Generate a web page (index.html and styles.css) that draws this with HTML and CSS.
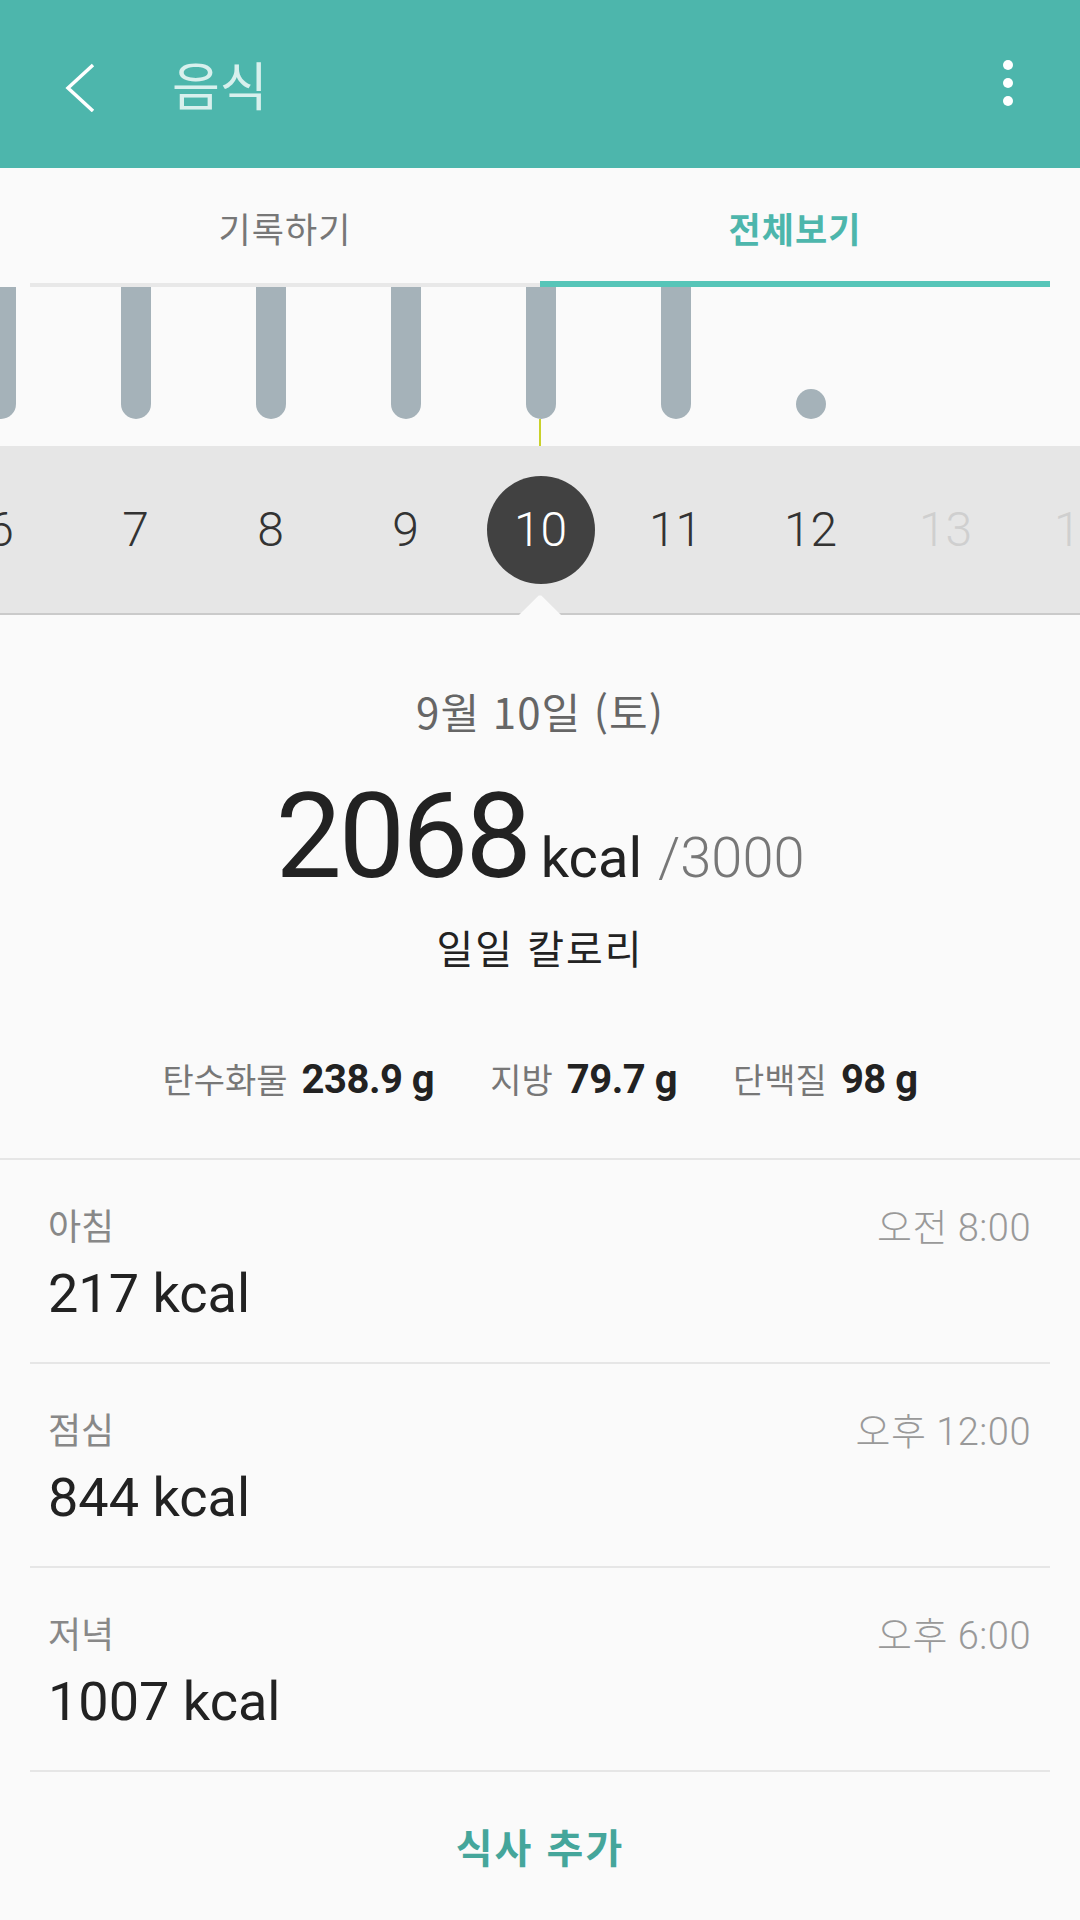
FILE: index.html
```html
<!DOCTYPE html>
<html lang="ko">
<head>
<meta charset="utf-8">
<title>음식</title>
<link rel="stylesheet" href="styles.css">
</head>
<body>
<div class="app">
  <header class="appbar">
    <svg class="back" width="40" height="60" viewBox="0 0 40 60"><polyline points="38,13 13,36 38,59" fill="none" stroke="#fff" stroke-width="3.5"/></svg>
    <h1 class="title">음식</h1>
    <div class="kebab"><span></span><span></span><span></span></div>
  </header>

  <nav class="tabs">
    <div class="tab"><div class="tab-label">기록하기</div><div class="tab-ind"></div></div>
    <div class="tab active"><div class="tab-label">전체보기</div><div class="tab-ind"></div></div>
  </nav>

  <section class="chart">
    <div class="col"><div class="bar"></div></div>
    <div class="col"><div class="bar"></div></div>
    <div class="col"><div class="bar"></div></div>
    <div class="col"><div class="bar"></div></div>
    <div class="col"><div class="bar"></div></div>
    <div class="col"><div class="bar"></div></div>
    <div class="col"><div class="bar dot"></div></div>
    <div class="col"></div>
    <div class="col"></div>
  </section>
  <div class="cursor"><div class="cursor-line"></div></div>

  <section class="days">
    <div class="day">6</div>
    <div class="day">7</div>
    <div class="day">8</div>
    <div class="day">9</div>
    <div class="day selected"><span class="sel-circle">10</span></div>
    <div class="day">11</div>
    <div class="day">12</div>
    <div class="day future">13</div>
    <div class="day future">14</div>
    <div class="notch"></div>
  </section>

  <section class="summary">
    <div class="date">9월 10일 (토)</div>
    <div class="total">
      <span class="total-num">2068</span>
      <span class="total-unit">kcal</span>
      <span class="total-goal">/3000</span>
    </div>
    <div class="total-label">일일 칼로리</div>
    <div class="macros">
      <span class="macro"><span class="m-label">탄수화물</span><b class="m-val">238.9 g</b></span>
      <span class="macro"><span class="m-label">지방</span><b class="m-val">79.7 g</b></span>
      <span class="macro"><span class="m-label">단백질</span><b class="m-val">98 g</b></span>
    </div>
  </section>

  <ul class="meals">
    <li class="meal">
      <div class="meal-top"><span class="meal-name">아침</span><span class="meal-time">오전 8:00</span></div>
      <div class="meal-kcal">217 kcal</div>
    </li>
    <li class="meal">
      <div class="meal-top"><span class="meal-name">점심</span><span class="meal-time">오후 12:00</span></div>
      <div class="meal-kcal">844 kcal</div>
    </li>
    <li class="meal">
      <div class="meal-top"><span class="meal-name">저녁</span><span class="meal-time">오후 6:00</span></div>
      <div class="meal-kcal">1007 kcal</div>
    </li>
  </ul>

  <div class="add">식사 추가</div>
</div>
</body>
</html>
```

FILE: styles.css
```css
* { box-sizing: border-box; }
html, body { margin: 0; padding: 0; }
body {
  background: #fafafa;
  font-family: Roboto, "Noto Sans CJK KR", sans-serif;
  color: #222;
}
.app { width: 1080px; height: 1920px; overflow: hidden; background: #fafafa; }

.appbar {
  height: 168px;
  background: #4db6ac;
  display: flex;
  align-items: center;
  padding: 0 0 0 55px;
}
.back { display: block; margin-top: -4px; }
.title {
  margin: 0 0 0 77px;
  font-family: "Noto Sans CJK KR", sans-serif;
  font-weight: 400;
  font-size: 52px;
  line-height: 60px;
  color: #d8f0ed;
  flex: 1;
}
.kebab {
  width: 144px;
  display: flex;
  flex-direction: column;
  align-items: center;
  gap: 8px;
  margin-top: -2px;
}
.kebab span { width: 10px; height: 10px; border-radius: 50%; background: #fff; display: block; }

.tabs { display: flex; padding: 0 30px; }
.tab { flex: 1; display: flex; flex-direction: column; }
.tab-label {
  height: 113px;
  display: flex;
  align-items: center;
  justify-content: center;
  padding-top: 6px;
  font-family: "Noto Sans CJK KR", sans-serif;
  font-size: 35px;
  color: #777;
  letter-spacing: 1px;
}
.tab-ind { height: 4px; margin-top: 2px; background: #e8e8e8; }
.tab.active .tab-label { color: #4db6ac; font-weight: 700; }
.tab.active .tab-ind { height: 6px; margin-top: 0; background: #56c5b8; }

.chart {
  height: 132px;
  display: flex;
  align-items: flex-end;
  margin-left: -67px;
}
.col { width: 135px; flex: none; display: flex; justify-content: center; align-items: flex-end; height: 100%; }
.bar { width: 30px; height: 132px; background: #a5b2b9; border-radius: 0 0 15px 15px; }
.bar.dot { height: 30px; border-radius: 50%; }

.cursor { height: 27px; display: flex; justify-content: center; }
.cursor-line { width: 2px; background: #c9d12b; }

.days {
  position: relative;
  height: 169px;
  background: #e6e6e6;
  border-bottom: 2px solid #cacaca;
  display: flex;
  align-items: center;
  margin-left: -67px;
  width: 1282px;
}
.day {
  width: 135px;
  flex: none;
  text-align: center;
  font-size: 48px;
  font-weight: 300;
  color: #333;
  display: flex;
  justify-content: center;
  align-items: center;
}
.day.future { color: #cfcfcf; }
.sel-circle {
  width: 108px;
  height: 108px;
  border-radius: 50%;
  background: #414141;
  color: #fff;
  display: flex;
  align-items: center;
  justify-content: center;
}
.notch {
  position: absolute;
  left: 586px;
  bottom: -2px;
  width: 42px;
  height: 20px;
  background: #fafafa;
  clip-path: polygon(0 100%, 47% 3%, 53% 3%, 100% 100%);
}

.summary {
  display: flex;
  flex-direction: column;
  align-items: center;
  padding-top: 70px;
  border-bottom: 2px solid #e6e6e6;
  padding-bottom: 53px;
}
.date {
  font-family: "Noto Sans CJK KR", sans-serif;
  font-size: 42px;
  line-height: 52px;
  color: #666;
  letter-spacing: 1px;
}
.total {
  margin-top: 40px;
  display: flex;
  align-items: baseline;
}
.total-num { font-size: 118px; line-height: 120px; font-weight: 400; color: #222; letter-spacing: -3px; }
.total-unit { font-size: 56px; line-height: 60px; margin-left: 12px; color: #222; }
.total-goal { font-size: 56px; line-height: 60px; margin-left: 16px; color: #777; font-weight: 300; }
.total-label {
  margin-top: 25px;
  font-family: "Noto Sans CJK KR", sans-serif;
  font-size: 40px;
  line-height: 50px;
  color: #222;
  letter-spacing: 2px;
}
.macros {
  margin-top: 82px;
  display: flex;
  gap: 56px;
  line-height: 50px;
}
.macro { display: flex; align-items: baseline; gap: 14px; }
.m-label { font-family: "Noto Sans CJK KR", sans-serif; font-size: 34px; color: #777; }
.m-val { font-size: 40px; font-weight: 700; color: #222; letter-spacing: -0.5px; }

.meals { list-style: none; margin: 0; padding: 0; }
.meal {
  margin: 0 30px;
  padding: 42px 19px 38px 18px;
  border-bottom: 2px solid #e6e6e6;
}
.meal-top { display: flex; justify-content: space-between; align-items: center; height: 44px; }
.meal-name { font-family: "Noto Sans CJK KR", sans-serif; font-size: 36px; color: #888; }
.meal-time { font-family: Roboto, "Noto Sans CJK KR", sans-serif; font-size: 38px; color: #999; font-weight: 300; letter-spacing: 0.5px; }
.meal-kcal { margin-top: 18px; font-size: 54px; line-height: 60px; color: #222; }

.add {
  height: 148px;
  display: flex;
  align-items: center;
  justify-content: center;
  font-family: "Noto Sans CJK KR", sans-serif;
  font-weight: 700;
  font-size: 40px;
  color: #45a69b;
  letter-spacing: 2px;
}
```
